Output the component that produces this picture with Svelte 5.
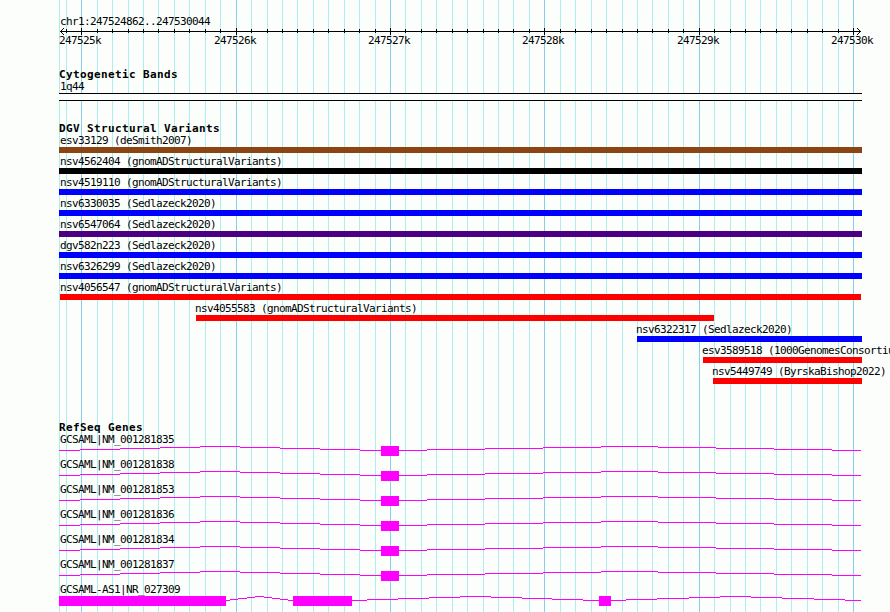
<script lang="ts">
	type Variant = { name: string; start: number; end: number; color: string };
	type Gene = { name: string; exons: number[][]; introns: number[][] };

	const region = 'chr1:247524862..247530044';

	const minorTicks = [
		66, 97, 112, 128, 143, 158, 174, 189, 205, 220, 251, 267, 282, 297, 313, 328, 344, 359, 375,
		405, 421, 436, 452, 467, 483, 498, 513, 529, 560, 575, 591, 606, 622, 637, 652, 668, 683,
		714, 730, 745, 760, 776, 791, 807, 822, 838
	];

	const majorTicks = [
		{ x: 81, label: '247525k' },
		{ x: 236, label: '247526k' },
		{ x: 390, label: '247527k' },
		{ x: 544, label: '247528k' },
		{ x: 699, label: '247529k' },
		{ x: 853, label: '247530k' }
	];

	const variants: Variant[] = [
		{ name: 'esv33129 (deSmith2007)', start: 59, end: 862, color: '#8b4513' },
		{ name: 'nsv4562404 (gnomADStructuralVariants)', start: 59, end: 862, color: '#000' },
		{ name: 'nsv4519110 (gnomADStructuralVariants)', start: 59, end: 862, color: '#00f' },
		{ name: 'nsv6330035 (Sedlazeck2020)', start: 59, end: 862, color: '#00f' },
		{ name: 'nsv6547064 (Sedlazeck2020)', start: 59, end: 862, color: '#4b0082' },
		{ name: 'dgv582n223 (Sedlazeck2020)', start: 59, end: 862, color: '#00f' },
		{ name: 'nsv6326299 (Sedlazeck2020)', start: 59, end: 862, color: '#00f' },
		{ name: 'nsv4056547 (gnomADStructuralVariants)', start: 60, end: 861, color: '#f00' },
		{ name: 'nsv4055583 (gnomADStructuralVariants)', start: 196, end: 714, color: '#f00' },
		{ name: 'nsv6322317 (Sedlazeck2020)', start: 637, end: 862, color: '#00f' },
		{ name: 'esv3589518 (1000GenomesConsortium)', start: 703, end: 862, color: '#f00' },
		{ name: 'nsv5449749 (ByrskaBishop2022)', start: 713, end: 862, color: '#f00' }
	];

	// x positions where an intron line moves up or down by one pixel
	const gcsaml = {
		exons: [[381, 399]],
		introns: [
			[59, 80, 120, 160, 200, 240, 280, 320, 360, 381],
			[399, 427, 485, 543, 601, 658, 716, 774, 832, 861]
		]
	};

	const genes: Gene[] = [
		...['001281835', '001281838', '001281853', '001281836', '001281834', '001281837'].map((id) => ({
			name: `GCSAML|NM_${id}`,
			...gcsaml
		})),
		{
			name: 'GCSAML-AS1|NR_027309',
			exons: [[59, 226], [293, 352], [599, 611]],
			introns: [
				[226, 230, 238, 247, 255, 264, 272, 280, 288, 293],
				[352, 367, 398, 429, 460, 491, 522, 552, 583, 599],
				[611, 626, 657, 689, 720, 751, 782, 814, 845, 861]
			]
		}
	];

	const steps = [4, 3, 2, 1, 0, 1, 2, 3, 4];

	function intronPath(xs: number[]) {
		return steps.map((y, i) => `M${xs[i]} ${y + 0.5}H${xs[i + 1]}`).join('');
	}
</script>

<main class="browser">
	<svg class="grid" width="890" height="612" shape-rendering="crispEdges" aria-hidden="true">
		{#each [59, ...minorTicks] as x}
			<rect class="minor" {x} y="0" width="1" height="612" />
		{/each}
		{#each majorTicks as tick}
			<rect class="major" x={tick.x} y="0" width="1" height="612" />
		{/each}
	</svg>

	<header>
		<div class="label">{region}</div>
		<svg class="scale" width="890" height="20">
			<g shape-rendering="crispEdges">
				<rect x="60" y="3" width="801" height="1" />
				{#each minorTicks as x}
					<rect {x} y="1" width="1" height="4" />
				{/each}
				{#each majorTicks as tick}
					<rect x={tick.x} y="0" width="1" height="7" />
				{/each}
				{#each [0, 1, 2, 3] as d}
					<rect x={60 + d} y={3 - d} width="1" height="1" />
					<rect x={60 + d} y={3 + d} width="1" height="1" />
					<rect x={860 - d} y={3 - d} width="1" height="1" />
					<rect x={860 - d} y={3 + d} width="1" height="1" />
				{/each}
			</g>
			{#each majorTicks as tick}
				<text x={tick.x - 22} y="16">{tick.label}</text>
			{/each}
		</svg>
	</header>

	<section class="bands">
		<h2>Cytogenetic Bands</h2>
		<div class="label">1q44</div>
		<div class="band"></div>
	</section>

	<section class="variants">
		<h2>DGV Structural Variants</h2>
		{#each variants as v}
			<div class="variant">
				<div class="label" style:margin-left="{Math.max(60, v.start - 1)}px">{v.name}</div>
				<div
					class="bar"
					style:margin-left="{v.start}px"
					style:width="{v.end - v.start}px"
					style:background={v.color}
				></div>
			</div>
		{/each}
	</section>

	<section class="genes">
		<h2>RefSeq Genes</h2>
		{#each genes as gene}
			<div class="gene">
				<div class="label">{gene.name}</div>
				<svg width="890" height="10" shape-rendering="crispEdges">
					{#each gene.introns as xs}
						<path d={intronPath(xs)} />
					{/each}
					{#each gene.exons as [start, end]}
						<rect x={start} y="0" width={end - start} height="10" />
					{/each}
				</svg>
			</div>
		{/each}
	</section>
</main>

<style>
	:global(body) {
		margin: 0;
		background: #fcfefc;
	}

	.browser {
		position: relative;
		display: flow-root;
		width: 890px;
		height: 612px;
		overflow: hidden;
		color: #000;
		font: 11px/13px 'DejaVu Sans Mono', monospace;
		letter-spacing: -0.62px;
	}

	.grid {
		position: absolute;
		inset: 0;
		z-index: -1;
	}

	.minor {
		fill: #afeeee;
	}

	.major {
		fill: #87ceeb;
	}

	svg {
		display: block;
	}

	.label {
		height: 13px;
		margin-left: 60px;
		white-space: nowrap;
	}

	h2 {
		height: 13px;
		margin: 0 0 0 59px;
		font-size: 11px;
		font-weight: bold;
		line-height: 13px;
		letter-spacing: 0.38px;
		white-space: nowrap;
	}

	header {
		padding-top: 15px;
	}

	.bands {
		padding-top: 20px;
	}

	.bands .label {
		margin-top: -1px;
	}

	.band {
		box-sizing: border-box;
		width: 803px;
		height: 8px;
		margin-left: 59px;
		border: solid #000;
		border-width: 1px 0;
		background: #fcfefc;
	}

	.variants {
		padding-top: 21px;
	}

	.variants h2 {
		height: 10px;
	}

	.variant {
		padding-top: 2px;
	}

	.bar {
		height: 6px;
	}

	.genes {
		padding-top: 37px;
	}

	.genes h2 {
		height: 12px;
	}

	.gene {
		height: 25px;
	}

	.gene path {
		fill: none;
		stroke: #f0f;
	}

	.gene rect {
		fill: #f0f;
	}
</style>
